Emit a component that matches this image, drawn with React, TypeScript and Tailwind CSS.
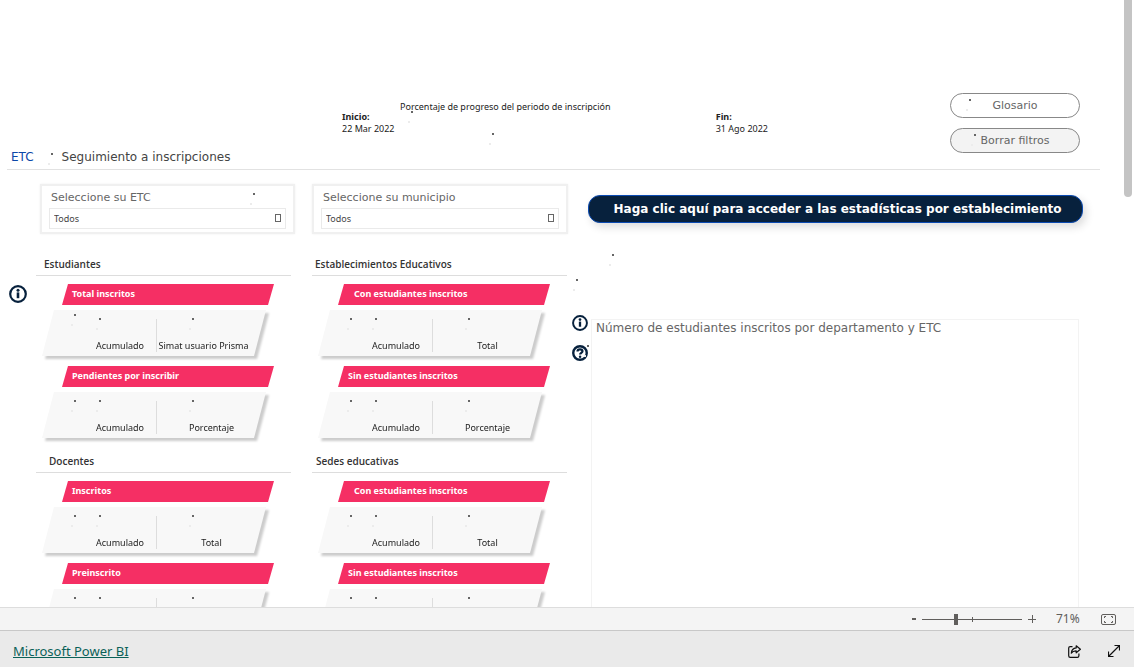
import { useId } from "react";
import clsx from "clsx";

type Stat = {
  title: string;
  label: string;
  indent?: boolean;
  wide?: boolean;
};

const students: Stat[] = [
  { title: "Total inscritos", label: "Simat usuario Prisma", wide: true },
  { title: "Pendientes por inscribir", label: "Porcentaje" },
];

const teachers: Stat[] = [
  { title: "Inscritos", label: "Total" },
  { title: "Preinscrito", label: "Total" },
];

const schools: Stat[] = [
  { title: "Con estudiantes inscritos", label: "Total", indent: true },
  { title: "Sin estudiantes inscritos", label: "Porcentaje" },
];

// Two specks left by a visual that is still loading
function Loading({ className }: { className: string }) {
  return (
    <span aria-hidden="true" className={clsx("pointer-events-none absolute h-3 w-[5px]", className)}>
      <span className="absolute top-0 right-0 size-[2px] bg-[#666666]" />
      <span className="absolute bottom-0 left-0 size-[2px] bg-[#ececec]" />
    </span>
  );
}

function InfoIcon({ className }: { className?: string }) {
  return (
    <svg viewBox="0 0 18 18" fill="none" className={className}>
      <circle cx="9" cy="9" r="7.8" stroke="#07213d" strokeWidth="2.2" />
      <path d="M9 7.4v5.8" stroke="#07213d" strokeWidth="2.6" />
      <circle cx="9" cy="5.2" r="1.5" fill="#07213d" />
    </svg>
  );
}

function HelpIcon({ className }: { className?: string }) {
  return (
    <svg viewBox="0 0 18 18" fill="none" className={className}>
      <circle cx="9" cy="9" r="7.6" stroke="#07213d" strokeWidth="2.7" />
      <path
        d="M6.2 7.2C6.2 5.7 7.5 4.8 9 4.8s2.8.9 2.800 2.300c0 1.800-2.700 1.900-2.700 3.700"
        stroke="#07213d"
        strokeWidth="2.5"
      />
      <circle cx="9.1" cy="13.2" r="1.4" fill="#07213d" />
    </svg>
  );
}

function Slicer({ label, loading }: { label: string; loading?: boolean }) {
  const id = useId();
  return (
    <div className="relative h-[50px] border-2 border-[#f0f0f0] px-[7px] pt-1 shadow-[0_0_2px_#f0f0f0]">
      <label htmlFor={id} className="block pl-[2px] font-['DejaVu_Sans',sans-serif] text-[11px] leading-4 text-[#666666]">
        {label}
      </label>
      <div className="relative pt-[2px]">
        <select
          id={id}
          className="block h-[21px] w-full appearance-none border border-[#eaeaea] bg-white pl-1 text-[9px] leading-[18px] text-[#444444]"
        >
          <option>Todos</option>
        </select>
        <span className="pointer-events-none absolute top-2 right-[5px] h-[8px] w-[6px] border border-[#666666]" />
      </div>
      {loading && <Loading className="top-[7px] right-[38px]" />}
    </div>
  );
}

function StatCard({ title, label, indent, wide }: Stat) {
  return (
    <article className="h-[82px]">
      <h3
        className={clsx(
          "ml-[26px] h-[21px] w-[212px] bg-[#f52f64] text-[9px] leading-5 font-bold text-white [clip-path:polygon(6px_0,100%_0,calc(100%_-_6px)_100%,0_100%)]",
          indent ? "pl-4" : "pl-[10px]",
        )}
      >
        {title}
      </h3>
      <div className="mt-[5px] ml-[6px] w-[224px] drop-shadow-[3px_3px_1px_#cccccc]">
        <div className="relative flex h-[46px] bg-[#f8f8f8] text-[9px] leading-3 whitespace-nowrap text-[#222222] [clip-path:polygon(12px_0,100%_0,calc(100%_-_12px)_100%,0_100%)]">
          <p className="w-[114px] pt-[30px] pr-3 text-right">Acumulado</p>
          <span className="mt-[9px] h-[33px] w-px bg-[#dddddd]" />
          <p className={clsx("flex-1 pt-[30px] text-center", wide && "pr-4")}>{label}</p>
          <Loading className={clsx("left-[29px]", wide ? "top-1" : "top-2")} />
          <Loading className="top-2 left-[54px]" />
          <Loading className="top-2 left-[147px]" />
        </div>
      </div>
    </article>
  );
}

function StatSection({ title, stats, className }: { title: string; stats: Stat[]; className?: string }) {
  return (
    <section className="mb-[5px] w-[255px]">
      <h2
        className={clsx(
          "mb-2 h-5 border-b border-[#dddddd] font-['Open_Sans',sans-serif] text-[10px] leading-4 font-semibold text-[#333333]",
          className,
        )}
      >
        {title}
      </h2>
      {stats.map((stat) => (
        <StatCard key={stat.title} {...stat} />
      ))}
    </section>
  );
}

function Header() {
  return (
    <header className="ml-[7px] mr-6 flex items-start justify-between border-b border-[#e2e2e2]">
      <div className="flex-1 pt-[101px]">
        <div className="relative mr-[182px] ml-[335px] text-[9px] leading-3 text-[#222222]">
          <p className="h-[10px] pl-[58px]">Porcentaje de progreso del periodo de inscripción</p>
          <dl className="flex justify-between">
            <div>
              <dt className="font-bold">Inicio:</dt>
              <dd>22 Mar 2022</dd>
            </div>
            <div>
              <dt className="font-bold">Fin:</dt>
              <dd>31 Ago 2022</dd>
            </div>
          </dl>
          <Loading className="top-[10px] left-[66px]" />
          <Loading className="top-8 left-[147px]" />
        </div>
        <div className="relative flex h-[34px] gap-7 pt-3 pl-1 font-['DejaVu_Sans',sans-serif] text-xs leading-5">
          <a href="#etc" className="text-[#0b47a8]">
            ETC
          </a>
          <h1 className="text-[#444444]">Seguimiento a inscripciones</h1>
          <Loading className="top-[18px] left-[41px]" />
        </div>
      </div>
      <div className="mt-[93px] mr-5 flex w-[130px] flex-col gap-[10px] font-['DejaVu_Sans',sans-serif] text-[11px] text-[#666666]">
        <button type="button" className="relative h-[25px] rounded-full border border-[#888888] bg-white pt-px">
          Glosario
          <Loading className="top-[5px] left-[15px]" />
        </button>
        <button type="button" className="relative h-[25px] rounded-full border border-[#888888] bg-[#f3f3f3] pt-px">
          Borrar filtros
          <Loading className="top-[5px] left-[20px]" />
        </button>
      </div>
    </header>
  );
}

function ZoomBar() {
  return (
    <div className="flex h-[23px] shrink-0 items-center justify-end border-t border-[#dddddd] bg-[#f4f4f4] pr-[18px] text-xs text-[#605e5c]">
      <button type="button" aria-label="Alejar" className="mr-1 flex h-4 w-2 items-center justify-center">
        <span className="h-[2px] w-1 bg-[#605e5c]" />
      </button>
      <div className="relative flex items-center">
        <input
          type="range"
          aria-label="Zoom"
          defaultValue={33}
          className="h-4 w-[100px] appearance-none bg-transparent [&::-webkit-slider-runnable-track]:h-px [&::-webkit-slider-runnable-track]:bg-[#605e5c] [&::-webkit-slider-thumb]:-mt-[5px] [&::-webkit-slider-thumb]:h-[11px] [&::-webkit-slider-thumb]:w-1 [&::-webkit-slider-thumb]:appearance-none [&::-webkit-slider-thumb]:bg-[#605e5c]"
        />
        <span className="pointer-events-none absolute left-1/2 h-[5px] w-px bg-[#605e5c]" />
      </div>
      <button type="button" aria-label="Acercar" className="ml-[6px] flex size-2 items-center justify-center">
        <svg viewBox="0 0 8 8" className="size-2" stroke="#605e5c">
          <path d="M0 4.5h8M4.5 0v8" />
        </svg>
      </button>
      <span className="ml-5 w-[25px] whitespace-nowrap">71%</span>
      <button type="button" aria-label="Ajustar a la página" className="ml-5">
        <svg viewBox="0 0 15 11" fill="none" stroke="#605e5c" className="block h-[11px] w-[15px]">
          <rect x=".5" y=".5" width="14" height="10" rx="1.5" />
          <path d="M5 2.5H3.5V4M10 2.5h1.5V4M5 8.5H3.5V7M10 8.5h1.5V7" />
        </svg>
      </button>
    </div>
  );
}

function Footer() {
  return (
    <footer className="flex h-[37px] shrink-0 items-center border-t border-[#c8c8c8] bg-[#eaeaea] pt-1 pr-[14px] pl-[13px]">
      <a href="#powerbi" className="mr-auto text-[13px] leading-5 text-[#0a6158] underline">
        Microsoft Power BI
      </a>
      <button type="button" aria-label="Compartir" className="mr-[27px]">
        <svg viewBox="0 0 13 13" fill="none" stroke="#111111" strokeWidth="1.2" strokeLinejoin="round" className="block size-[13px]">
          <path d="M4.500 1.600H2.200Q.7 1.600 .7 3.100v7.600Q.7 12.300 2.200 12.300h7.100Q10.900 12.300 10.900 10.700V8.500" />
          <path d="M8.200.8l4.200 3.500L8.200 7.800V5.900C5.600 5.800 4.300 6.600 3.300 8.200 3.500 5.200 5.200 3.200 8.200 2.900Z" />
        </svg>
      </button>
      <button type="button" aria-label="Pantalla completa">
        <svg viewBox="0 0 12 12" fill="none" stroke="#111111" strokeWidth="1.2" className="block size-3">
          <path d="M.5 11.500l11-11M6.500.500h5v5M.500 6.500v5h5" />
        </svg>
      </button>
    </footer>
  );
}

export default function App() {
  return (
    <div className="flex h-screen flex-col bg-white font-['Noto_Sans','Open_Sans',sans-serif]">
      <div className="flex min-h-0 flex-1">
        <main className="min-w-0 flex-1 overflow-x-hidden overflow-y-auto [scrollbar-width:none]">
          <Header />
          <div className="flex pt-[14px]">
            <button type="button" aria-label="Información" className="mt-[101px] ml-[9px] size-[18px] shrink-0">
              <InfoIcon className="size-[18px]" />
            </button>
            <div className="ml-[9px] w-[259px] shrink-0">
              <div className="mb-[22px] ml-1">
                <Slicer label="Seleccione su ETC" loading />
              </div>
              <StatSection title="Estudiantes" stats={students} className="pl-2" />
              <StatSection title="Docentes" stats={teachers} className="pl-[13px]" />
            </div>
            <div className="ml-[17px] w-64 shrink-0">
              <div className="mb-[22px]">
                <Slicer label="Seleccione su municipio" />
              </div>
              <StatSection title="Establecimientos Educativos" stats={schools} className="pl-[3px]" />
              <StatSection title="Sedes educativas" stats={schools} className="pl-1" />
            </div>
            <div className="relative mr-[41px] ml-1 min-w-0 flex-1 pt-[11px] font-['DejaVu_Sans',sans-serif]">
              <div className="pl-4">
                <button
                  type="button"
                  className="h-7 w-full rounded-[12px] border border-[#0b4bb3] bg-[#07213d] pl-1 text-xs font-bold whitespace-nowrap text-white shadow-[3px_4px_8px_#dddddd]"
                >
                  Haga clic aquí para acceder a las estadísticas por establecimiento
                </button>
              </div>
              <div className="mt-24 flex gap-[3px]">
                <div className="-mt-1 flex w-4 flex-col gap-[14px]">
                  <button type="button" aria-label="Información">
                    <InfoIcon className="size-4" />
                  </button>
                  <button type="button" aria-label="Ayuda">
                    <HelpIcon className="size-4" />
                  </button>
                </div>
                <section className="mr-1 h-[420px] flex-1 border border-[#f3f3f3] pl-1">
                  <h2 className="text-xs leading-4 text-[#666666]">
                    Número de estudiantes inscritos por departamento y ETC
                  </h2>
                </section>
              </div>
              <Loading className="top-[70px] left-[37px]" />
              <Loading className="top-[95px] left-[1px]" />
              <Loading className="top-[161px] left-[12px]" />
            </div>
          </div>
        </main>
        <div className="w-[10px] shrink-0">
          <div className="h-[197px] w-2 rounded-b-full bg-[#c4c4c4]" />
        </div>
      </div>
      <ZoomBar />
      <Footer />
    </div>
  );
}
